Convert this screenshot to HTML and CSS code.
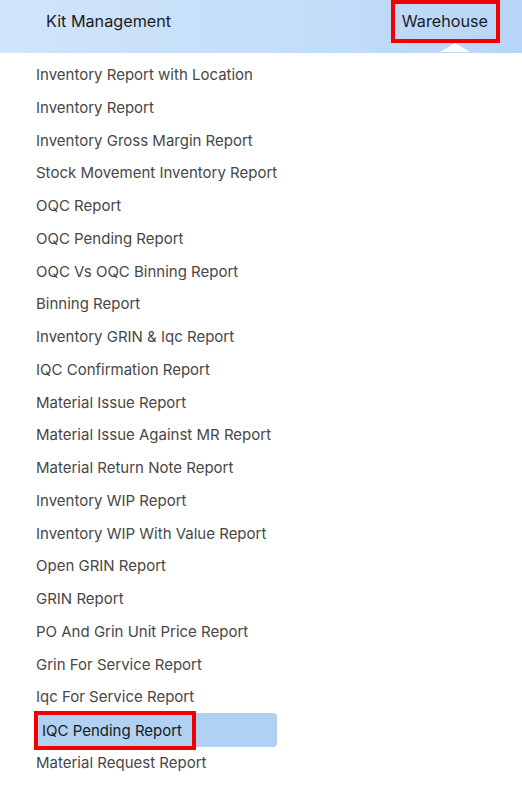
FILE: index.html
```html
<!DOCTYPE html>
<html>
<head>
<meta charset="utf-8">
<link rel="stylesheet" href="styles.css">
</head>
<body>
<header class="topbar">
  <span class="tab">Kit Management</span>
  <span class="tab tab-active">Warehouse</span>
</header>
<ul class="menu">
  <li class="item">Inventory Report with Location</li>
  <li class="item">Inventory Report</li>
  <li class="item">Inventory Gross Margin Report</li>
  <li class="item">Stock Movement Inventory Report</li>
  <li class="item">OQC Report</li>
  <li class="item">OQC Pending Report</li>
  <li class="item">OQC Vs OQC Binning Report</li>
  <li class="item">Binning Report</li>
  <li class="item">Inventory GRIN &amp; Iqc Report</li>
  <li class="item">IQC Confirmation Report</li>
  <li class="item">Material Issue Report</li>
  <li class="item">Material Issue Against MR Report</li>
  <li class="item">Material Return Note Report</li>
  <li class="item">Inventory WIP Report</li>
  <li class="item">Inventory WIP With Value Report</li>
  <li class="item">Open GRIN Report</li>
  <li class="item">GRIN Report</li>
  <li class="item">PO And Grin Unit Price Report</li>
  <li class="item">Grin For Service Report</li>
  <li class="item">Iqc For Service Report</li>
  <li class="item item-active"><span class="mark">IQC Pending Report</span></li>
  <li class="item">Material Request Report</li>
</ul>
</body>
</html>
```
FILE: styles.css
```css
html, body {
  margin: 0;
  padding: 0;
  background: #ffffff;
  font-family: Inter, "Noto Sans", sans-serif;
}
.topbar {
  height: 53px;
  background: linear-gradient(90deg, #d1e5fb 0%, #c3dcf8 60%, #b8d6f7 100%);
  display: flex;
  align-items: center;
  justify-content: space-between;
  padding: 0 22px 0 46px;
  position: relative;
}
.tab {
  font-size: 16.2px;
  color: #1c1c1c;
  line-height: 20px;
  padding-bottom: 11px;
}
.tab-active {
  position: relative;
  border: 4px solid #f00000;
  padding: 7px 8px 8px 7px;
  margin-top: -10px;
}
.tab-active::after {
  content: "";
  position: absolute;
  left: 45px;
  bottom: -13px;
  border-left: 15px solid transparent;
  border-right: 15px solid transparent;
  border-bottom: 9px solid #ffffff;
}
.menu {
  list-style: none;
  margin: 0;
  padding: 6px 0 0 36px;
}
.item {
  font-size: 15px;
  color: #474747;
  height: 32.76px;
  line-height: 32.76px;
}
.item-active {
  width: 241px;
  height: 34px;
  line-height: 34px;
  background: #b0d1f1;
  border-radius: 0 4px 4px 0;
  color: #1a1a1a;
  margin: -1px 0 -0.24px 0;
}
.mark {
  display: inline-block;
  box-sizing: border-box;
  border: 4px solid #f00000;
  margin-left: -2px;
  margin-top: -2px;
  padding: 0 0 0 4px;
  width: 162px;
  height: 39px;
  line-height: 32px;
  vertical-align: top;
}
```
